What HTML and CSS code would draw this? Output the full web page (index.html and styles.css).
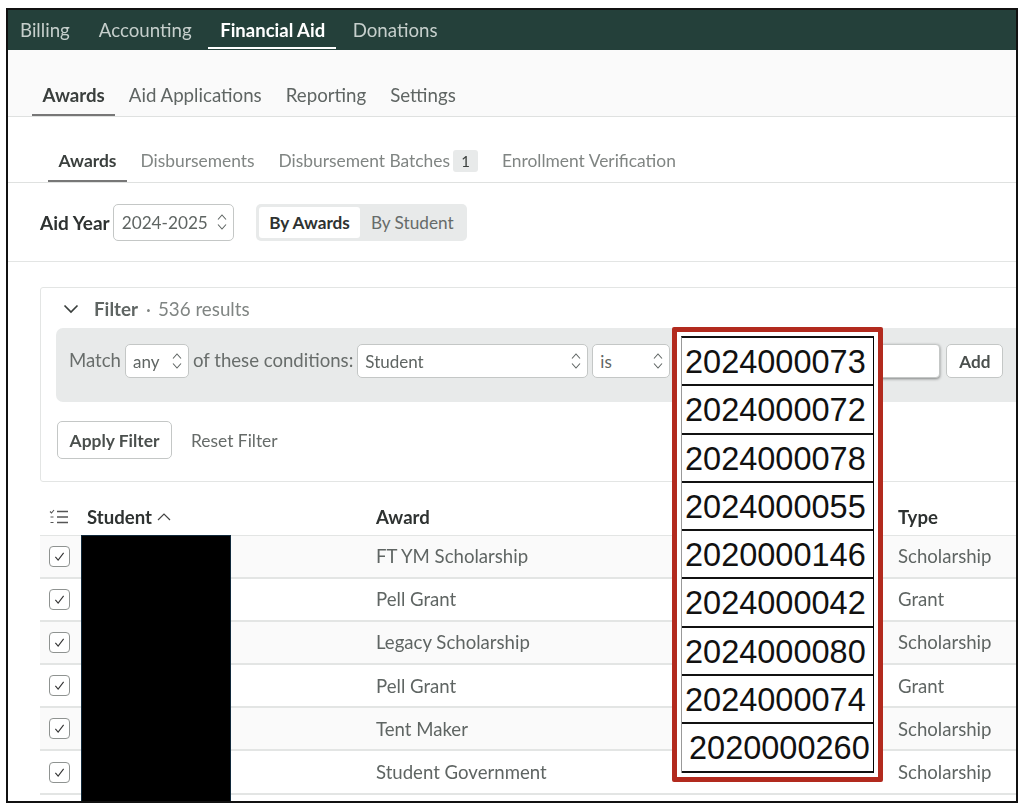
FILE: index.html
```html
<!DOCTYPE html>
<html lang="en">
<head>
    <meta charset="UTF-8">
    <meta name="viewport" content="width=device-width, initial-scale=1.0">
    <title>Financial Aid - Awards</title>
    <link rel="stylesheet" href="styles.css">
</head>
<body>
    <svg class="defs" width="0" height="0">
        <symbol id="updown" viewBox="0 0 10 18">
            <path d="M1 6.500 5 2l4 4.500M1 11.500 5 16l4-4.500" fill="none" stroke="currentColor" stroke-width="1.100"/>
        </symbol>
        <symbol id="check" viewBox="0 0 12 12">
            <path d="M1.500 6.500 4.500 10 10.500 2" fill="none" stroke="currentColor" stroke-width="1.200"/>
        </symbol>
    </svg>
    <div class="frame">
        <nav class="top-nav">
            <a>Billing</a>
            <a>Accounting</a>
            <a class="active">Financial Aid</a>
            <a>Donations</a>
        </nav>
        <div class="tabs-main">
            <a class="active">Awards</a>
            <a>Aid Applications</a>
            <a>Reporting</a>
            <a>Settings</a>
        </div>
        <div class="tabs-sub">
            <a class="active">Awards</a>
            <a>Disbursements</a>
            <a>Disbursement Batches<span class="badge">1</span></a>
            <a>Enrollment Verification</a>
        </div>
        <div class="year-row">
            <label>Aid Year</label>
            <div class="select year-select">2024-2025<svg class="updown"><use href="#updown"/></svg></div>
            <div class="segment">
                <span class="on">By Awards</span>
                <span>By Student</span>
            </div>
        </div>
        <section class="filter">
            <div class="filter-head">
                <svg class="chevron" viewBox="0 0 16 10"><path d="M1.500 1.500 8 8l6.500-6.500" fill="none" stroke="currentColor" stroke-width="1.700"/></svg>
                <strong>Filter</strong>
                <span class="dot">·</span>
                <span>536 results</span>
            </div>
            <div class="conditions">
                <span class="match">Match</span>
                <div class="select any-select">any<svg class="updown"><use href="#updown"/></svg></div>
                <span>of these conditions:</span>
                <div class="select field-select">Student<svg class="updown"><use href="#updown"/></svg></div>
                <div class="select is-select">is<svg class="updown"><use href="#updown"/></svg></div>
                <div class="value-input"></div>
                <button class="btn add-btn">Add</button>
            </div>
            <div class="filter-actions">
                <button class="btn apply-btn">Apply Filter</button>
                <a>Reset Filter</a>
            </div>
        </section>
        <div class="table">
            <div class="row head">
                <div class="cell-check">
                    <svg class="list-icon" viewBox="0 0 20 16"><path d="M8 2.500h11M8 8h11M8 13.500h11" stroke="currentColor" stroke-width="1.300" fill="none"/><path d="M1 2.500l1.500 1.500L5 1M1.500 8h3M1.500 13.500h3" stroke="currentColor" stroke-width="1.100" fill="none"/></svg>
                </div>
                <div>Student <svg class="sort" viewBox="0 0 14 8"><path d="M1 7 7 1l6 6" fill="none" stroke="currentColor" stroke-width="1.200"/></svg></div>
                <div>Award</div>
                <div></div>
                <div>Type</div>
            </div>
            <div class="row">
                <div class="cell-check"><span class="box"><svg><use href="#check"/></svg></span></div>
                <div></div><div>FT YM Scholarship</div><div></div><div>Scholarship</div>
            </div>
            <div class="row">
                <div class="cell-check"><span class="box"><svg><use href="#check"/></svg></span></div>
                <div></div><div>Pell Grant</div><div></div><div>Grant</div>
            </div>
            <div class="row">
                <div class="cell-check"><span class="box"><svg><use href="#check"/></svg></span></div>
                <div></div><div>Legacy Scholarship</div><div></div><div>Scholarship</div>
            </div>
            <div class="row">
                <div class="cell-check"><span class="box"><svg><use href="#check"/></svg></span></div>
                <div></div><div>Pell Grant</div><div></div><div>Grant</div>
            </div>
            <div class="row">
                <div class="cell-check"><span class="box"><svg><use href="#check"/></svg></span></div>
                <div></div><div>Tent Maker</div><div></div><div>Scholarship</div>
            </div>
            <div class="row">
                <div class="cell-check"><span class="box"><svg><use href="#check"/></svg></span></div>
                <div></div><div>Student Government</div><div></div><div>Scholarship</div>
            </div>
        </div>
        <!-- pasted over the screenshot -->
        <div class="redaction"></div>
        <div class="callout">
            <div class="ids">
                <div>2024000073</div>
                <div>2024000072</div>
                <div>2024000078</div>
                <div>2024000055</div>
                <div>2020000146</div>
                <div>2024000042</div>
                <div>2024000080</div>
                <div>2024000074</div>
                <div class="nudged">2020000260</div>
            </div>
        </div>
    </div>
</body>
</html>
```

FILE: styles.css
```css
html, body {
    margin: 0;
    height: 810px;
    overflow: hidden;
    background-color: #fff;
    font-family: Lato, "Open Sans", sans-serif;
}
.defs {
    position: absolute;
}
.frame {
    position: relative;
    box-sizing: border-box;
    width: 1012px;
    height: 795px;
    margin: 8px 0 0 6px;
    border: 2px solid #111;
    overflow: hidden;
    color: #5f6563;
    filter: blur(0.35px);
}
.top-nav {
    display: flex;
    height: 40px;
    padding-left: 1px;
    background-color: #24403a;
    color: #c6cfcc;
    font-size: 18.7px;
}
.top-nav a {
    box-sizing: border-box;
    padding: 0 11px;
    margin-right: 5.5px;
    line-height: 40px;
    height: 39px;
}
.top-nav a:first-child {
    margin-right: 7px;
}
.top-nav a.active {
    color: #fff;
    font-size: 18.5px;
    font-weight: 700;
    border-bottom: 2px solid #fff;
    padding: 0 11px 0 12px;
}
.tabs-main {
    display: flex;
    align-items: flex-end;
    gap: 3px;
    height: 66px;
    padding-left: 24px;
    background-color: #fafafa;
    border-bottom: 1px solid #dfe1e0;
    font-size: 18.7px;
}
.tabs-main a {
    box-sizing: border-box;
    padding: 0 10.5px;
    line-height: 30px;
    height: 36px;
}
.tabs-main a.active, .tabs-sub a.active {
    color: #3a3f3d;
    font-weight: 700;
    border-bottom: 2px solid #777;
}
.tabs-sub {
    display: flex;
    align-items: flex-end;
    gap: 3px;
    height: 65px;
    padding-left: 40px;
    border-bottom: 1px solid #dfe1e0;
    font-size: 17.4px;
    color: #808583;
}
.tabs-sub a {
    box-sizing: border-box;
    padding: 0 10.5px;
    line-height: 29px;
    height: 36px;
}
.badge {
    display: inline-block;
    min-width: 25px;
    height: 22px;
    margin-left: 3px;
    background-color: #e8eaea;
    border-radius: 3px;
    color: #3a3f3d;
    font-size: 15px;
    line-height: 22px;
    text-align: center;
}
.year-row {
    display: flex;
    align-items: center;
    height: 78px;
    padding: 0 0 0 32px;
    border-bottom: 1px solid #e3e5e4;
}
.year-row label {
    margin-right: 3px;
    color: #2e3231;
    font-size: 19px;
    font-weight: 700;
}
.select {
    display: flex;
    align-items: center;
    justify-content: space-between;
    box-sizing: border-box;
    padding: 0 6px 0 7px;
    background-color: #fff;
    border: 1px solid #c4c7c6;
    border-radius: 5px;
    color: #5f6563;
    font-size: 17px;
}
.updown {
    width: 10px;
    height: 18px;
    flex: none;
}
.year-select {
    width: 121px;
    height: 37px;
    padding-left: 8px;
    font-size: 17.2px;
}
.segment {
    display: flex;
    height: 37px;
    margin-left: 22px;
    padding: 3px;
    box-sizing: border-box;
    background-color: #e8eaea;
    border-radius: 5px;
    font-size: 17.2px;
}
.segment span {
    padding: 0 10.5px;
    line-height: 31px;
    color: #666b69;
}
.segment .on {
    background-color: #fff;
    border-radius: 3px;
    color: #2e3231;
    font-weight: 700;
}
.filter {
    box-sizing: border-box;
    width: 1040px;
    height: 195px;
    margin: 25px 0 0 32px;
    padding: 0 15px;
    border: 1px solid #e3e5e4;
    border-radius: 3px;
}
.filter-head {
    display: flex;
    align-items: center;
    height: 40px;
    font-size: 18.8px;
    color: #808583;
}
.filter-head strong {
    color: #5f6563;
    margin-right: 8px;
}
.dot {
    margin-right: 7px;
}
.chevron {
    width: 16px;
    height: 10px;
    margin: 2px 15px 0 7px;
    color: #3a3f3d;
}
.conditions {
    display: flex;
    align-items: flex-start;
    gap: 4px;
    height: 74px;
    padding: 16px 0 0 13px;
    box-sizing: border-box;
    background-color: #e8eaea;
    border-radius: 7px;
    font-size: 18.6px;
    line-height: 33px;
    color: #686d6b;
}
.conditions .select {
    height: 34px;
}
.any-select {
    width: 64px;
}
.field-select {
    width: 231px;
}
.is-select {
    width: 78px;
}
.value-input {
    box-sizing: border-box;
    width: 266px;
    height: 34px;
    background-color: #fff;
    border: 1px solid #c4c7c6;
    border-radius: 4px;
    box-shadow: 0 1px 3px rgba(0, 0, 0, 0.45);
}
.btn {
    box-sizing: border-box;
    background-color: #fff;
    border: 1px solid #c4c7c6;
    border-radius: 5px;
    color: #4a4f4d;
    font-family: inherit;
    font-weight: 700;
}
.add-btn {
    width: 57px;
    height: 34px;
    margin-left: 2px;
    font-size: 17.2px;
}
.filter-actions {
    display: flex;
    align-items: center;
    gap: 19px;
    margin-top: 19px;
    padding-left: 1px;
    font-size: 17.4px;
    color: #666b69;
}
.apply-btn {
    width: 115px;
    height: 38px;
    font-size: 17.4px;
}
.table {
    margin: 0 0 0 32px;
    width: 976px;
}
.row {
    display: grid;
    grid-template-columns: 41px 289px 260px 262px 124px;
    height: 43.200px;
    box-sizing: border-box;
    align-items: center;
    border-bottom: 2px solid #e3e5e4;
    font-size: 18.6px;
    color: #5f6563;
}
.row > div {
    padding-left: 6px;
}
.row > .cell-check {
    padding-left: 9px;
    display: flex;
}
.row:nth-child(even) {
    background-color: #fafafa;
}
.row.head {
    height: 53.500px;
    padding-top: 18px;
    border-bottom-width: 1px;
    background-color: #fff;
    color: #2e3231;
    font-weight: 700;
}
.list-icon {
    width: 20px;
    height: 16px;
    color: #555;
}
.sort {
    width: 14px;
    height: 8px;
    margin: 0 0 3px 1px;
    color: #444;
}
.box {
    display: flex;
    align-items: center;
    justify-content: center;
    box-sizing: border-box;
    width: 21px;
    height: 21px;
    background-color: #fff;
    border: 1.5px solid #8f9391;
    border-radius: 4px;
    color: #333;
}
.box svg {
    width: 11px;
    height: 11px;
}
.redaction {
    position: absolute;
    left: 74px;
    top: 526px;
    width: 148px;
    height: 270px;
    background-color: #000;
    box-shadow: 0 0 0 1px #10283a;
}
.callout {
    position: absolute;
    left: 664px;
    top: 317px;
    box-sizing: border-box;
    width: 211px;
    height: 455px;
    padding: 4px 4px 0 4px;
    background-color: #fff;
    border: 5px solid #b22a1e;
    border-radius: 2px;
}
.ids {
    width: 193px;
    border-left: 1px solid #999;
    border-right: 1px solid #000;
    border-top: 2px solid #111;
    box-sizing: border-box;
}
.ids div {
    box-sizing: border-box;
    height: 48.300px;
    padding-left: 3px;
    border-bottom: 2px solid #111;
    color: #111;
    font-family: "Liberation Sans", Arial, sans-serif;
    font-size: 32.500px;
    line-height: 49px;
    white-space: nowrap;
}
.ids .nudged {
    padding-left: 7px;
}
```
